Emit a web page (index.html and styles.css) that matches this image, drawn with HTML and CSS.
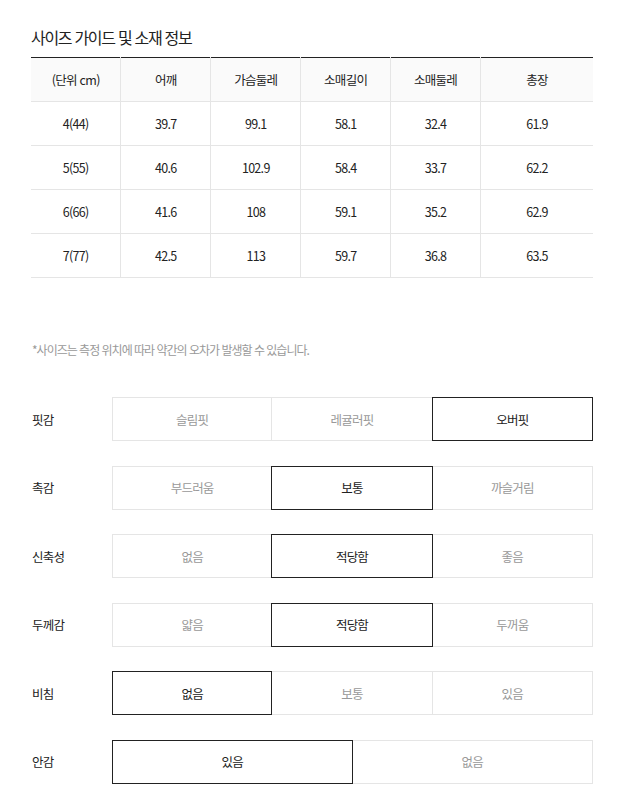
FILE: index.html
```html
<!DOCTYPE html>
<html lang="ko">
<head>
<meta charset="utf-8">
<link rel="stylesheet" href="styles.css">
</head>
<body>
<div class="wrap">
  <h2 class="title">사이즈 가이드 및 소재 정보</h2>
  <table class="size">
    <thead>
      <tr><th class="c16">(단위 cm)</th><th class="c16">어깨</th><th class="c16">가슴둘레</th><th class="c16">소매길이</th><th class="c16">소매둘레</th><th>총장</th></tr>
    </thead>
    <tbody>
      <tr><td>4(44)</td><td>39.7</td><td>99.1</td><td>58.1</td><td>32.4</td><td>61.9</td></tr>
      <tr><td>5(55)</td><td>40.6</td><td>102.9</td><td>58.4</td><td>33.7</td><td>62.2</td></tr>
      <tr><td>6(66)</td><td>41.6</td><td>108</td><td>59.1</td><td>35.2</td><td>62.9</td></tr>
      <tr><td>7(77)</td><td>42.5</td><td>113</td><td>59.7</td><td>36.8</td><td>63.5</td></tr>
    </tbody>
  </table>
  <p class="note">*사이즈는 측정 위치에 따라 약간의 오차가 발생할 수 있습니다.</p>
  <div class="attrs">
    <div class="row">
      <div class="label">핏감</div>
      <div class="opts three"><div class="opt">슬림핏</div><div class="opt">레귤러핏</div><div class="opt on">오버핏</div></div>
    </div>
    <div class="row">
      <div class="label">촉감</div>
      <div class="opts three"><div class="opt">부드러움</div><div class="opt on">보통</div><div class="opt">까슬거림</div></div>
    </div>
    <div class="row">
      <div class="label">신축성</div>
      <div class="opts three"><div class="opt">없음</div><div class="opt on">적당함</div><div class="opt">좋음</div></div>
    </div>
    <div class="row">
      <div class="label">두께감</div>
      <div class="opts three"><div class="opt">얇음</div><div class="opt on">적당함</div><div class="opt">두꺼움</div></div>
    </div>
    <div class="row">
      <div class="label">비침</div>
      <div class="opts three"><div class="opt on">없음</div><div class="opt">보통</div><div class="opt">있음</div></div>
    </div>
    <div class="row">
      <div class="label">안감</div>
      <div class="opts two"><div class="opt on">있음</div><div class="opt">없음</div></div>
    </div>
  </div>
</div>
</body>
</html>
```

FILE: styles.css
```css
* { box-sizing: border-box; }
html, body { margin: 0; padding: 0; background: #fff; }
body {
  font-family: "Noto Sans CJK KR", "Noto Sans", sans-serif;
  color: #222;
}
.wrap {
  width: 562px;
  margin-left: 31px;
  padding-top: 26px;
}
.title {
  margin: 0;
  font-size: 16px;
  font-weight: 400;
  letter-spacing: -1.3px;
  line-height: 22px;
  height: 31px;
  color: #222;
}
.size {
  width: 100%;
  border-collapse: collapse;
  table-layout: fixed;
  border-top: 1px solid #222;
}
.size .c16 { width: 16%; }
.size th, .size td {
  height: 44px;
  padding: 0;
  text-align: center;
  vertical-align: middle;
  font-size: 12.5px;
  font-weight: 400;
  letter-spacing: -0.7px;
  color: #222;
  border-bottom: 1px solid #e5e5e5;
  border-left: 1px solid #e5e5e5;
}
.size th:first-child, .size td:first-child { border-left: none; }
.size th { background: #fafafa; }
.note {
  margin: 62px 0 0 1px;
  font-size: 12px;
  line-height: 20px;
  letter-spacing: -1px;
  color: #999;
}
.attrs {
  margin-top: 37px;
  display: flex;
  flex-direction: column;
  gap: 24.5px;
}
.row {
  display: flex;
  align-items: center;
}
.label {
  width: 81px;
  padding-left: 1px;
  font-size: 12.5px;
  letter-spacing: -0.8px;
  color: #222;
}
.opts {
  flex: 1;
  display: grid;
}
.opts.three { grid-template-columns: repeat(3, 1fr); }
.opts.two { grid-template-columns: repeat(2, 1fr); }
.opt {
  height: 44px;
  display: flex;
  align-items: center;
  justify-content: center;
  border: 1px solid #e5e5e5;
  font-size: 12.5px;
  letter-spacing: -0.8px;
  color: #999;
  background: #fff;
}
.opt + .opt { margin-left: -1px; }
.opt.on {
  border-color: #222;
  color: #222;
  position: relative;
  z-index: 1;
}
```
